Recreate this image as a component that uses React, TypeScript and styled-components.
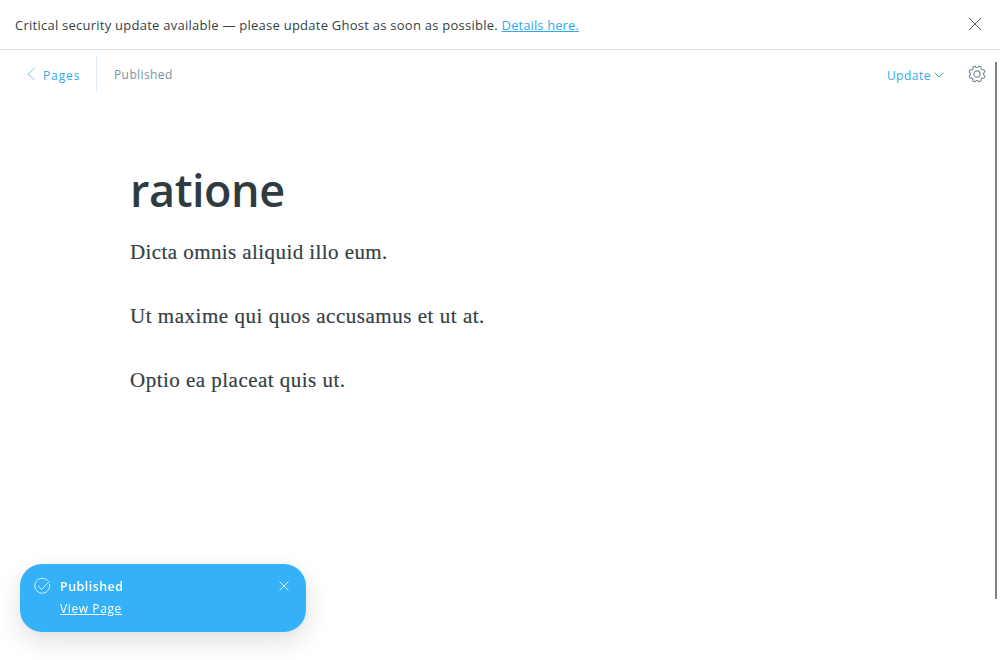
import React from "react";
import styled, { createGlobalStyle } from "styled-components";

const GlobalStyle = createGlobalStyle`
  * { box-sizing: border-box; }
  html, body { margin: 0; padding: 0; }
  body {
    background: #fff;
    color: #394047;
    font-family: "Open Sans", "Noto Sans", sans-serif;
    font-size: 13px;
    overflow: hidden;
  }
`;

const Page = styled.div`
  display: flex;
  flex-direction: column;
  width: 1000px;
  height: 660px;
  background: #fff;
`;

const Alert = styled.aside`
  display: flex;
  align-items: center;
  justify-content: space-between;
  height: 50px;
  padding: 0 18px 2px 15px;
  border-bottom: 1px solid #dfe1e3;
`;

const AlertText = styled.div`
  padding-top: 2px;
  color: #343f44;
  font-size: 13px;
  line-height: 20px;
  letter-spacing: 0.25px;
  white-space: nowrap;
`;

const Link = styled.a`
  color: #30aaf2;
  text-decoration: underline;
  letter-spacing: 0.1px;
`;

const IconButton = styled.button`
  display: flex;
  padding: 0;
  border: 0;
  background: none;
`;

const Workspace = styled.div`
  display: flex;
  flex: 1;
  min-height: 0;
`;

const Editor = styled.main`
  display: flex;
  flex: 1;
  flex-direction: column;
`;

const Toolbar = styled.header`
  display: flex;
  align-items: center;
  height: 48px;
  padding: 0 9px 0 27px;
`;

const BackLink = styled.a`
  display: flex;
  align-items: center;
  gap: 7px;
  width: 69px;
  color: #30aaf2;
  font-size: 12px;
  letter-spacing: 0.9px;
`;

const Status = styled.div`
  display: flex;
  flex: 1;
  align-items: center;
  height: 36px;
  padding-left: 17px;
  border-left: 1px solid #dfebf5;
  color: #7c929e;
  font-size: 12px;
  letter-spacing: 0.4px;
`;

const UpdateButton = styled.button`
  display: flex;
  align-items: center;
  gap: 3px;
  margin-right: 24px;
  padding: 2px 0 0;
  border: 0;
  background: none;
  color: #30aaf2;
  font: inherit;
  font-size: 12px;
  letter-spacing: 0.5px;
`;

const Label = styled.span`
  padding-top: 2px;
`;

const Article = styled.article`
  padding: 60px 0 0 130px;
`;

const Title = styled.h1`
  margin: 0;
  color: #2e3b41;
  font-size: 45px;
  font-weight: 600;
  line-height: 64px;
  letter-spacing: -0.45px;
`;

const Body = styled.div`
  padding-top: 14px;
`;

const Paragraph = styled.p<{ $tracking: number }>`
  margin: 0 0 32px;
  color: #343f44;
  font-family: "Liberation Serif", serif;
  font-size: 21px;
  line-height: 32px;
  letter-spacing: ${(p) => p.$tracking}px;
  -webkit-text-stroke: 0.2px #343f44;
`;

const ScrollTrack = styled.div`
  width: 5px;
  padding-top: 12px;
`;

const ScrollThumb = styled.div`
  width: 2px;
  height: 537px;
  background: #808080;
`;

const Toast = styled.section`
  position: fixed;
  left: 20px;
  bottom: 28px;
  display: flex;
  align-items: flex-start;
  width: 286px;
  height: 68px;
  padding: 13px 17px 0 14px;
  border-radius: 22px;
  background: #35b1f9;
  box-shadow: 0 10px 24px rgba(0, 0, 0, 0.12), 0 0 16px rgba(0, 0, 0, 0.03);
  color: #fff;
`;

const ToastContent = styled.div`
  flex: 1;
  padding-left: 9px;
  line-height: 20px;
`;

const ToastTitle = styled.div`
  font-size: 12.5px;
  font-weight: 600;
  letter-spacing: 0.45px;
`;

const ToastLink = styled.a`
  display: block;
  margin-top: 2px;
  font-size: 12px;
  text-decoration: underline;
  letter-spacing: 0.6px;
`;

const ToastClose = styled(IconButton)`
  padding-top: 4px;
`;

function Cross({ size, color, width }: { size: number; color: string; width: number }) {
  return (
    <svg width={size} height={size} viewBox="0 0 14 14" fill="none" stroke={color} strokeWidth={width} strokeLinecap="round">
      <path d="M1.2 1.2 12.8 12.8M12.8 1.2 1.2 12.8" />
    </svg>
  );
}

// Eight rounded teeth, with a valley facing straight up.
const gearOutline =
  Array.from({ length: 96 }, (_, i) => {
    const angle = (i / 96) * Math.PI * 2;
    const wave = Math.cos(8 * (angle - Math.PI / 8));
    const radius = 7.35 + 0.95 * Math.tanh(1.6 * wave);
    const x = 9 + radius * Math.cos(angle);
    const y = 9 + radius * Math.sin(angle);
    return `${i ? "L" : "M"}${x.toFixed(2)} ${y.toFixed(2)}`;
  }).join("") + "Z";

function Gear() {
  return (
    <svg width="18" height="18" viewBox="0 0 18 18" fill="none" stroke="#738a94" strokeWidth="1.1" strokeLinejoin="round">
      <circle cx="9" cy="9" r="3.1" />
      <path d={gearOutline} />
    </svg>
  );
}

export default function App() {
  return (
    <Page>
      <GlobalStyle />
      <Alert>
        <AlertText>
          Critical security update available — please update Ghost as soon as possible. <Link>Details here.</Link>
        </AlertText>
        <IconButton aria-label="Close alert">
          <Cross size={14} color="#54595d" width={1} />
        </IconButton>
      </Alert>
      <Workspace>
        <Editor>
          <Toolbar>
            <BackLink>
              <svg width="9" height="14" viewBox="0 0 9 14" fill="none" stroke="#78c9f5" strokeLinecap="round">
                <path d="M7.5 1 1 7l6.5 6" />
              </svg>
              <Label>Pages</Label>
            </BackLink>
            <Status>Published</Status>
            <UpdateButton>
              Update
              <svg width="10" height="6" viewBox="0 0 10 6" fill="none" stroke="#5d9dc0" strokeLinecap="round">
                <path d="m1 1 4 4 4-4" />
              </svg>
            </UpdateButton>
            <IconButton aria-label="Settings">
              <Gear />
            </IconButton>
          </Toolbar>
          <Article>
            <Title>ratione</Title>
            <Body>
              <Paragraph $tracking={0.42}>Dicta omnis aliquid illo eum.</Paragraph>
              <Paragraph $tracking={0.53}>Ut maxime qui quos accusamus et ut at.</Paragraph>
              <Paragraph $tracking={0.48}>Optio ea placeat quis ut.</Paragraph>
            </Body>
          </Article>
        </Editor>
        <ScrollTrack>
          <ScrollThumb />
        </ScrollTrack>
      </Workspace>
      <Toast>
        <svg width="17" height="18" viewBox="0 0 17 18" fill="none" stroke="#d7f0ff" strokeLinecap="round" strokeLinejoin="round">
          <path d="M13.4 3.2A7.5 7.5 0 1 0 15.6 7" />
          <path d="m4.4 9.2 3.2 3.2 7.6-8" />
        </svg>
        <ToastContent>
          <ToastTitle>Published</ToastTitle>
          <ToastLink>View Page</ToastLink>
        </ToastContent>
        <ToastClose aria-label="Dismiss notification">
          <Cross size={10} color="#e3f4ff" width={1.4} />
        </ToastClose>
      </Toast>
    </Page>
  );
}
